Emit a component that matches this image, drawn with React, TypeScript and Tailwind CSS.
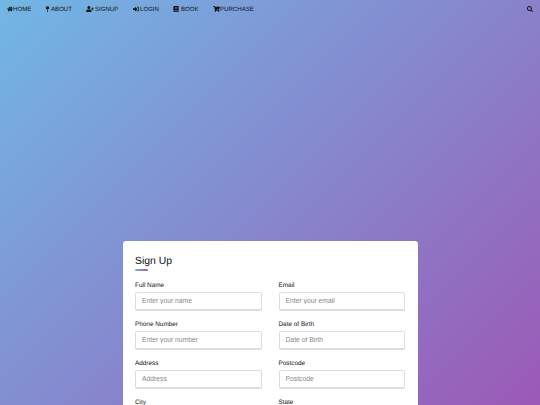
import { FaBook, FaHome, FaSearch, FaShoppingCart, FaSignInAlt, FaUserPlus, FaMapPin } from 'react-icons/fa';
import type { IconType } from 'react-icons';

const links: { label: string; Icon: IconType; box: string; icon: string; width: string }[] = [
  { label: 'HOME', Icon: FaHome, box: 'w-[6px]', icon: 'h-[6px] w-[6px]', width: 'w-[38px]' },
  { label: 'ABOUT', Icon: FaMapPin, box: 'w-[6px]', icon: 'h-[6px] w-[5px]', width: 'w-[41px]' },
  { label: 'SIGNUP', Icon: FaUserPlus, box: 'w-[9px]', icon: 'h-[6px] w-[8px]', width: 'w-[47px]' },
  { label: 'LOGIN', Icon: FaSignInAlt, box: 'w-[7px]', icon: 'h-[6px] w-[6px]', width: 'w-[40px]' },
  { label: 'BOOK', Icon: FaBook, box: 'w-[8px]', icon: 'h-[6px] w-[6px]', width: 'w-[40px]' },
  { label: 'PURCHASE', Icon: FaShoppingCart, box: 'w-[7px]', icon: 'h-[6px] w-[7px]', width: 'w-[52px]' },
];

const fields = [
  { label: 'Full Name', placeholder: 'Enter your name' },
  { label: 'Email', placeholder: 'Enter your email' },
  { label: 'Phone Number', placeholder: 'Enter your number' },
  { label: 'Date of Birth', placeholder: 'Date of Birth' },
  { label: 'Address', placeholder: 'Address' },
  { label: 'Postcode', placeholder: 'Postcode' },
  { label: 'City', placeholder: 'City' },
  { label: 'State', placeholder: 'State' },
];

export default function App() {
  return (
    <div className="h-screen overflow-hidden bg-[linear-gradient(135deg,#71b7e6,#9b59b6)] font-['Liberation_Sans',sans-serif] [text-rendering:geometricPrecision]">
      <nav className="flex h-[18px] items-center justify-between px-[7px] text-[6.1px] text-[#111]">
        <div className="flex items-center">
          {links.map(({ label, Icon, box, icon, width }) => (
            <a key={label} className={`flex items-center ${width}`}>
              <span className={`shrink-0 ${box}`}>
                <Icon className={icon} />
              </span>
              <span className="pt-[2px]">{label}</span>
            </a>
          ))}
        </div>
        <FaSearch className="h-[6px] w-[6px]" />
      </nav>

      <div className="flex justify-center pt-[223px]">
        <div className="w-[295px] rounded-[3px] bg-white px-[12.5px] pt-[14px] pb-4">
          <h2 className="text-[10.4px] leading-[14px] text-[#111]">Sign Up</h2>
          <div className="h-[1.5px] w-[13px] rounded-sm bg-[linear-gradient(135deg,#71b7e6,#9b59b6)]" />
          <div className="mt-[9px] grid grid-cols-2 gap-x-[17px] gap-y-[8px]">
            {fields.map((f) => (
              <div key={f.label}>
                <label className="block text-[6.4px] leading-[11px] text-[#111]">{f.label}</label>
                <input
                  placeholder={f.placeholder}
                  className="mt-[1px] block h-[19px] w-full rounded-[2px] border border-[#ddd] border-b-2 bg-white px-[6px] text-[6.75px] outline-none placeholder:text-[#888]"
                />
              </div>
            ))}
          </div>
        </div>
      </div>
    </div>
  );
}
